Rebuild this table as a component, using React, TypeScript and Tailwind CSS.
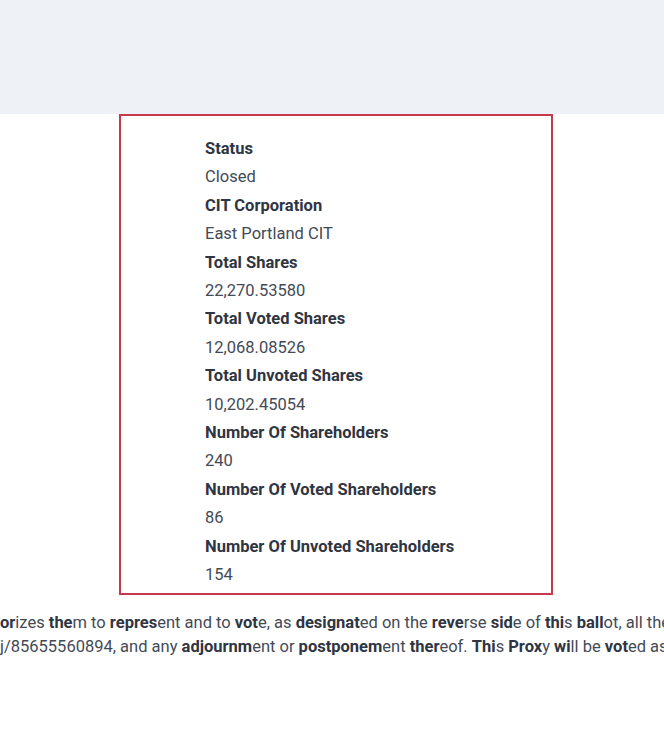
const rows: [string, string][] = [
  ['Status', 'Closed'],
  ['CIT Corporation', 'East Portland CIT'],
  ['Total Shares', '22,270.53580'],
  ['Total Voted Shares', '12,068.08526'],
  ['Total Unvoted Shares', '10,202.45054'],
  ['Number Of Shareholders', '240'],
  ['Number Of Voted Shareholders', '86'],
  ['Number Of Unvoted Shareholders', '154'],
];

function B({ children }: { children: React.ReactNode }) {
  return <b className="font-bold text-[#2f3542]">{children}</b>;
}

export default function App() {
  return (
    <div className="min-h-[752px] bg-white font-['Roboto',sans-serif] overflow-hidden">
      <div className="h-[114px] bg-[#eef2f6]" />

      <div className="ml-[119px] w-[434px] border-2 border-[#c63b4b] pt-[19px] pb-[3px] pl-[84px]">
        {rows.map(([label, value]) => (
          <div key={label} className="text-[16.5px] leading-[28.4px]">
            <div className="font-bold text-[#2f3542]">{label}</div>
            <div className="text-[#434a56]">{value}</div>
          </div>
        ))}
      </div>

      <div className="mt-[16px] text-[16.5px] leading-[24px] text-[#434a56] whitespace-nowrap">
        <div>
          <B>or</B>izes <B>the</B>m to <B>repres</B>ent and to <B>vot</B>e, as{' '}
          <B>designat</B>ed on the <B>reve</B>rse <B>sid</B>e of <B>thi</B>s{' '}
          <B>ball</B>ot, all the
        </div>
        <div>
          j/85655560894, and any <B>adjournm</B>ent or <B>postponem</B>ent{' '}
          <B>ther</B>eof. <B>Thi</B>s <B>Prox</B>y <B>wi</B>ll be <B>vot</B>ed as
        </div>
      </div>
    </div>
  );
}
